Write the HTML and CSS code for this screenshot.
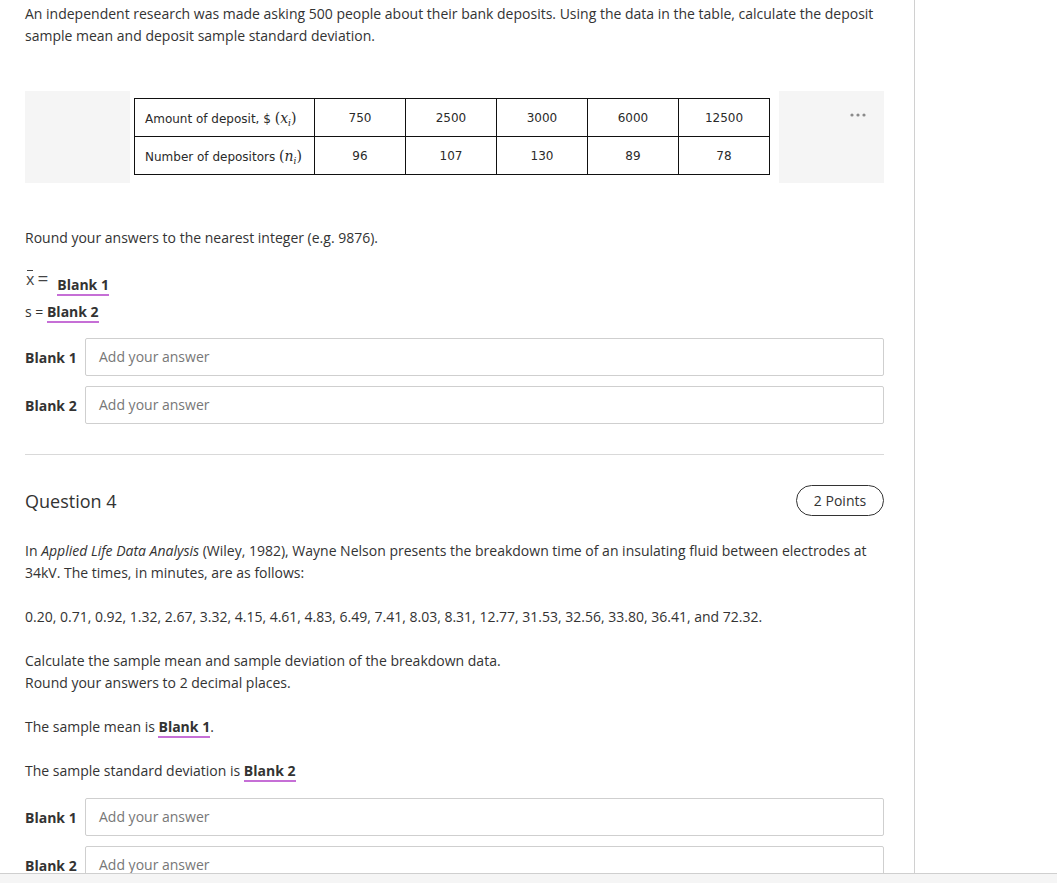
FILE: index.html
```html
<!DOCTYPE html>
<html>
<head>
<meta charset="utf-8">
<link rel="stylesheet" href="styles.css">
</head>
<body>
<div class="viewport">
  <div class="content">
    <p class="text">An independent research was made asking 500 people about their bank deposits. Using the data in the table, calculate the deposit sample mean and deposit sample standard deviation.</p>

    <div class="table-wrap">
      <div class="shade shade-left"></div>
      <table class="data">
        <tr>
          <td class="head">Amount of deposit, $ <span class="math">(<i>x</i><sub><i>i</i></sub>)</span></td>
          <td>750</td><td>2500</td><td>3000</td><td>6000</td><td>12500</td>
        </tr>
        <tr>
          <td class="head">Number of depositors <span class="math">(<i>n</i><sub><i>i</i></sub>)</span></td>
          <td>96</td><td>107</td><td>130</td><td>89</td><td>78</td>
        </tr>
      </table>
      <div class="shade shade-right">
        <svg class="dots" width="16" height="4" viewBox="0 0 16 4"><circle cx="2" cy="2" r="1.6" fill="#8a8a8a"/><circle cx="8" cy="2" r="1.6" fill="#8a8a8a"/><circle cx="14" cy="2" r="1.6" fill="#8a8a8a"/></svg>
      </div>
    </div>

    <p class="text round">Round your answers to the nearest integer (e.g. 9876).</p>

    <div class="eq eq-first"><span class="xeq"><span class="xbar">x</span><span class="eqsign">=</span></span><span class="blank">Blank 1</span></div>
    <div class="eq">s = <span class="blank">Blank 2</span></div>

    <div class="answers answers-first">
      <div class="answer-row"><span class="answer-label">Blank 1</span><div class="answer-input">Add your answer</div></div>
      <div class="answer-row"><span class="answer-label">Blank 2</span><div class="answer-input">Add your answer</div></div>
    </div>

    <hr class="sep">

    <div class="q-header">
      <h2 class="q-title">Question 4</h2>
      <span class="points">2 Points</span>
    </div>

    <p class="text q-para">In <i>Applied Life Data Analysis</i> (Wiley, 1982), Wayne Nelson presents the breakdown time of an insulating fluid between electrodes at 34kV. The times, in minutes, are as follows:</p>
    <p class="text q-para2">0.20, 0.71, 0.92, 1.32, 2.67, 3.32, 4.15, 4.61, 4.83, 6.49, 7.41, 8.03, 8.31, 12.77, 31.53, 32.56, 33.80, 36.41, and 72.32.</p>
    <p class="text q-para2">Calculate the sample mean and sample deviation of the breakdown data.<br>Round your answers to 2 decimal places.</p>
    <p class="text q-para2">The sample mean is <span class="blank">Blank 1</span>.</p>
    <p class="text q-para2">The sample standard deviation is <span class="blank">Blank 2</span></p>

    <div class="answers answers-second">
      <div class="answer-row"><span class="answer-label">Blank 1</span><div class="answer-input">Add your answer</div></div>
      <div class="answer-row"><span class="answer-label">Blank 2</span><div class="answer-input">Add your answer</div></div>
    </div>
  </div>
</div>
<div class="hscroll"></div>
</body>
</html>
```

FILE: styles.css
```css
html, body {
  margin: 0;
  padding: 0;
  background: #fff;
  overflow: hidden;
}
body {
  width: 1057px;
  height: 883px;
  font-family: "Open Sans", "Liberation Sans", sans-serif;
  font-size: 14px;
  color: #333;
}
.viewport {
  height: 873px;
  overflow: hidden;
}
.content {
  width: 915px;
  height: 873px;
  box-sizing: border-box;
  padding: 3px 30px 0 25px;
  border-right: 1px solid #d0d0d0;
  overflow: hidden;
}
.text {
  margin: 0;
  line-height: 22px;
  width: 859px;
}
.table-wrap {
  margin-top: 44px;
  width: 859px;
  height: 92px;
  display: flex;
  align-items: flex-start;
}
.shade {
  width: 105px;
  height: 92px;
  background: #f5f5f5;
  flex: none;
}
.shade-left { margin-right: 4px; }
.shade-right {
  margin-left: 9px;
  display: flex;
  justify-content: flex-end;
  align-items: flex-start;
  box-sizing: border-box;
  padding: 22px 18px 0 0;
}
.data {
  margin-top: 7px;
  border-collapse: collapse;
  font-family: "DejaVu Sans", Verdana, sans-serif;
  font-size: 12px;
  color: #2a2a2a;
  flex: none;
  table-layout: fixed;
  width: 635px;
}
.data td {
  border: 1px solid #111;
  height: 38px;
  padding: 0;
  width: 91px;
  text-align: center;
  box-sizing: border-box;
}
.data td.head {
  width: 180px;
  text-align: left;
  padding-left: 10px;
  white-space: nowrap;
}
.math {
  font-family: "DejaVu Serif", "Liberation Serif", serif;
  font-size: 14px;
}
.math sub {
  font-size: 9px;
  vertical-align: -3px;
  line-height: 0;
}
.round { margin-top: 44px; }
.eq {
  line-height: 27px;
  height: 27px;
}
.eq-first { margin-top: 22px; }
.xeq {
  font-size: 16px;
  vertical-align: 5px;
  line-height: 0;
  color: #444;
  margin-right: 9px;
}
.xbar {
  position: relative;
  margin-left: 1px;
}
.xbar::before {
  content: "";
  position: absolute;
  left: 1px;
  right: 1px;
  top: 2px;
  border-top: 1px solid #444;
}
.eqsign {
  font-size: 19px;
  margin-left: 3px;
}
.blank {
  font-weight: bold;
  border-bottom: 2px solid #c66fd6;
}
.answers-first { margin-top: 13px; }
.answers-second { margin-top: 16px; }
.answer-row {
  display: flex;
  align-items: center;
  height: 38px;
  margin-bottom: 10px;
}
.answer-label {
  width: 60px;
  flex: none;
  font-weight: bold;
}
.answer-input {
  flex: none;
  width: 799px;
  height: 38px;
  box-sizing: border-box;
  border: 1px solid #cfcfcf;
  border-radius: 2px;
  padding-left: 13px;
  line-height: 36px;
  color: #777;
}
.sep {
  margin: 30px 0 0 0;
  width: 859px;
  border: none;
  border-top: 1px solid #d9d9d9;
  height: 0;
}
.q-header {
  margin-top: 30px;
  width: 859px;
  height: 31px;
  display: flex;
  align-items: center;
  justify-content: space-between;
}
.q-title {
  margin: 0;
  font-size: 18px;
  font-weight: normal;
  color: #333;
}
.points {
  box-sizing: border-box;
  height: 31px;
  width: 88px;
  border: 1px solid #333;
  border-radius: 16px;
  text-align: center;
  line-height: 29px;
  font-size: 14px;
}
.q-para { margin-top: 24px; }
.q-para2 { margin-top: 22px; }
.hscroll {
  height: 9px;
  background: #f5f5f5;
  border-top: 1px solid #cfcfcf;
}
```
